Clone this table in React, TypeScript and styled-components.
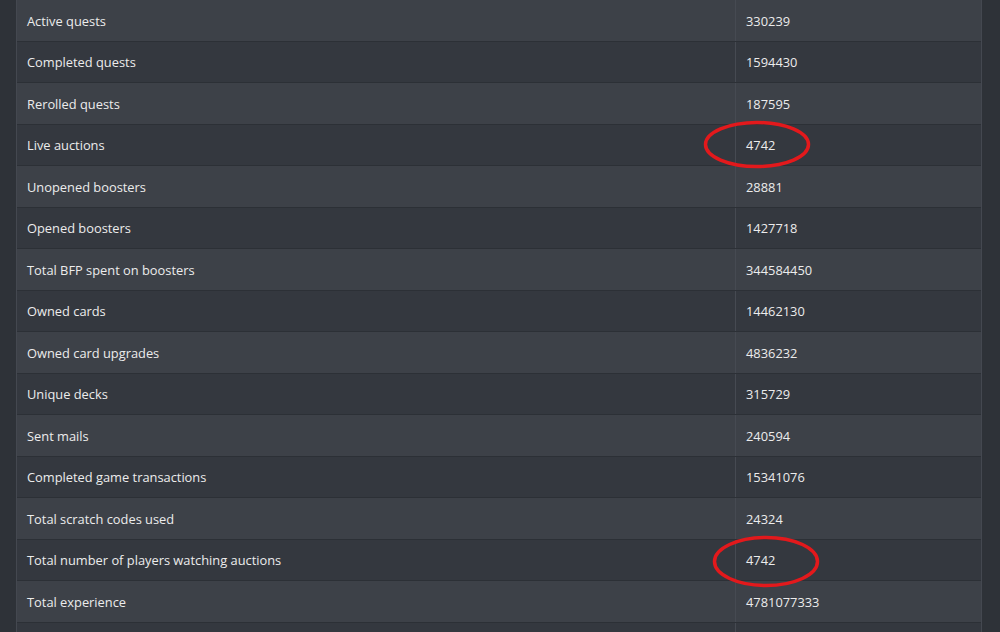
import React from "react";
import styled, { createGlobalStyle } from "styled-components";

const Global = createGlobalStyle`
  html, body { margin: 0; padding: 0; background: #2e3238; }
  body { font-family: "Open Sans", "Noto Sans", sans-serif; }
`;

const Page = styled.div`
  width: 1000px;
  height: 632px;
  overflow: hidden;
  background: #2e3238;
  padding-left: 16px;
  box-sizing: border-box;
  position: relative;
`;

const Table = styled.div`
  width: 966px;
  border-left: 1px solid #444850;
  border-right: 1px solid #444850;
  box-sizing: border-box;
`;

const Row = styled.div<{ $odd: boolean }>`
  display: grid;
  grid-template-columns: 718px 1fr;
  height: 41.5px;
  box-sizing: border-box;
  border-bottom: 1px solid #2c3036;
  background: ${(p) => (p.$odd ? "#3d4148" : "#34383f")};
`;

const Cell = styled.div<{ $value?: boolean }>`
  display: flex;
  align-items: center;
  padding-left: 10px;
  padding-top: 1px;
  font-size: 12.85px;
  color: #ececec;
  border-left: ${(p) => (p.$value ? "1px solid #464a52" : "none")};
`;

const Ellipse = styled.svg`
  position: absolute;
  overflow: visible;
`;

const rows: [string, string][] = [
  ["Active quests", "330239"],
  ["Completed quests", "1594430"],
  ["Rerolled quests", "187595"],
  ["Live auctions", "4742"],
  ["Unopened boosters", "28881"],
  ["Opened boosters", "1427718"],
  ["Total BFP spent on boosters", "344584450"],
  ["Owned cards", "14462130"],
  ["Owned card upgrades", "4836232"],
  ["Unique decks", "315729"],
  ["Sent mails", "240594"],
  ["Completed game transactions", "15341076"],
  ["Total scratch codes used", "24324"],
  ["Total number of players watching auctions", "4742"],
  ["Total experience", "4781077333"],
  ["", ""],
];

export default function App() {
  return (
    <Page>
      <Global />
      <Table>
        {rows.map(([k, v], i) => (
          <Row key={i} $odd={i % 2 === 0}>
            <Cell>{k}</Cell>
            <Cell $value>{v}</Cell>
          </Row>
        ))}
      </Table>
      <Ellipse style={{ left: 704, top: 121 }} width="106" height="47">
        <ellipse cx="53" cy="23.5" rx="51.5" ry="22" fill="none" stroke="#e3191c" strokeWidth="3.5" />
      </Ellipse>
      <Ellipse style={{ left: 713, top: 536 }} width="106" height="51">
        <ellipse cx="53" cy="25.5" rx="51.5" ry="24" fill="none" stroke="#e3191c" strokeWidth="3.5" />
      </Ellipse>
    </Page>
  );
}
